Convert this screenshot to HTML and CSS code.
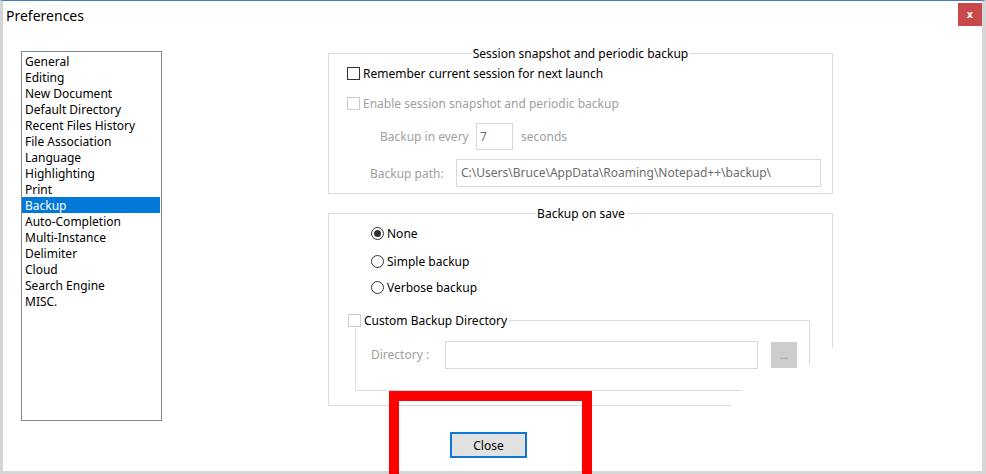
FILE: index.html
```html
<!DOCTYPE html>
<html>
<head>
<meta charset="utf-8">
<link rel="stylesheet" href="styles.css">
</head>
<body>
<div class="window">
  <div class="titlebar">
    <div class="title">Preferences</div>
    <div class="xbtn">x</div>
  </div>
  <div class="main">
    <div class="list">
      <div class="item">General</div>
      <div class="item">Editing</div>
      <div class="item">New Document</div>
      <div class="item">Default Directory</div>
      <div class="item">Recent Files History</div>
      <div class="item">File Association</div>
      <div class="item">Language</div>
      <div class="item">Highlighting</div>
      <div class="item">Print</div>
      <div class="item selected">Backup</div>
      <div class="item">Auto-Completion</div>
      <div class="item">Multi-Instance</div>
      <div class="item">Delimiter</div>
      <div class="item">Cloud</div>
      <div class="item">Search Engine</div>
      <div class="item">MISC.</div>
    </div>
    <div class="panel">
      <div class="group g1">
        <div class="legend">Session snapshot and periodic backup</div>
        <div class="row r1"><span class="cb"></span><span class="lbl">Remember current session for next launch</span></div>
        <div class="row r2 dis"><span class="cb off"></span><span class="lbl">Enable session snapshot and periodic backup</span></div>
        <div class="row r3 dis"><span class="fl w96">Backup in every</span><span class="inp secs">7</span><span class="after">seconds</span></div>
        <div class="row r4 dis"><span class="fl w86">Backup path:</span><span class="inp path">C:\Users\Bruce\AppData\Roaming\Notepad++\backup\</span></div>
      </div>
      <div class="group g2">
        <div class="legend">Backup on save</div>
        <div class="row rad first"><span class="radio on"></span><span class="lbl">None</span></div>
        <div class="row rad second"><span class="radio"></span><span class="lbl">Simple backup</span></div>
        <div class="row rad third"><span class="radio"></span><span class="lbl">Verbose backup</span></div>
        <div class="sub">
          <div class="sublegend"><span class="cb off"></span><span class="lbl">Custom Backup Directory</span></div>
          <div class="row dirrow dis"><span class="fl w74">Directory :</span><span class="inp dir"></span><span class="dots">...</span></div>
        </div>
      </div>
    </div>
  </div>
  <div class="footer">
    <div class="closebtn">Close</div>
  </div>
  <div class="mark"></div>
</div>
</body>
</html>
```

FILE: styles.css
```css
html, body {
  margin: 0;
  padding: 0;
  background: #ffffff;
}
body {
  width: 986px;
  height: 474px;
  overflow: hidden;
  font-family: "Noto Sans", "Open Sans", sans-serif;
  font-size: 12px;
  color: #000;
}
.window {
  position: relative;
  box-sizing: border-box;
  width: 986px;
  height: 474px;
  border-top: 1px solid #3c7fc2;
  border-left: 3px solid #d4d4d4;
  border-right: 4px solid #d6d6d6;
  border-bottom: 3px solid #d6d6d6;
  background: #fff;
}
.titlebar {
  display: flex;
  align-items: flex-start;
  height: 30px;
}
.title {
  margin-top: 5px;
  padding-left: 3px;
  font-size: 14px;
  line-height: 20px;
}
.xbtn {
  margin-left: auto;
  margin-top: 2px;
  width: 24px;
  height: 23px;
  background: #c9484c;
  color: #fff;
  font-size: 10px;
  font-weight: bold;
  line-height: 22px;
  text-align: center;
}
.main {
  display: flex;
  align-items: flex-start;
  height: 390px;
}
.list {
  margin-top: 20px;
  margin-left: 18px;
  box-sizing: border-box;
  width: 141px;
  height: 370px;
  border: 1px solid #828790;
  padding-top: 1px;
}
.item {
  height: 16px;
  line-height: 17px;
  padding-left: 3px;
  margin-right: 1px;
  white-space: nowrap;
}
.item.selected {
  background: #0078d7;
  color: #fff;
}
.panel {
  margin-left: 166px;
  margin-top: 22px;
}
.group {
  box-sizing: border-box;
  width: 505px;
  border: 1px solid #dcdcdc;
}
.g1 { height: 141px; }
.g2 {
  height: 193px;
  margin-top: 19px;
  border-right: none;
  border-bottom: none;
  background:
    linear-gradient(#dcdcdc, #dcdcdc) right top / 1px 134px no-repeat,
    linear-gradient(#dcdcdc, #dcdcdc) left bottom / 402px 1px no-repeat;
}
.legend {
  width: max-content;
  margin: -9px auto 0;
  padding: 0 2px;
  background: #fff;
  height: 16px;
  line-height: 17px;
}
.row {
  display: flex;
  align-items: center;
  height: 16px;
  line-height: 17px;
  white-space: nowrap;
}
.dis { color: #a0a0a0; }
.cb {
  box-sizing: border-box;
  width: 13px;
  height: 13px;
  border: 1px solid #333;
  background: #fff;
  flex: none;
}
.cb.off { border-color: #cccccc; }
.lbl { margin-left: 3px; }
.r1 { margin-top: 4px; padding-left: 18px; }
.r2 { margin-top: 14px; padding-left: 18px; }
.r3 { margin-top: 12px; padding-left: 51px; height: 27px; }
.r4 { margin-top: 9px; padding-left: 41px; height: 28px; }
.fl { flex: none; }
.w96 { width: 96px; }
.w86 { width: 86px; }
.w74 { width: 74px; }
.inp {
  box-sizing: border-box;
  border: 1px solid #d9d9d9;
  background: #fff;
  height: 27px;
  line-height: 25px;
  padding-left: 3px;
  flex: none;
}
.secs { width: 37px; color: #6d6d6d; }
.after { margin-left: 8px; }
.path { width: 365px; height: 28px; line-height: 26px; padding-left: 4px; color: #6d6d6d; }
.rad { padding-left: 42px; }
.rad .lbl { margin-left: 3px; color: #000; }
.first { margin-top: 4px; }
.second { margin-top: 12px; }
.third { margin-top: 10px; }
.radio {
  box-sizing: border-box;
  width: 13px;
  height: 13px;
  border: 1px solid #333;
  border-radius: 50%;
  background: #fff;
  flex: none;
  display: flex;
  align-items: center;
  justify-content: center;
}
.radio.on::before {
  content: "";
  width: 7px;
  height: 7px;
  border-radius: 50%;
  background: #333;
}
.sub {
  box-sizing: border-box;
  margin-top: 25px;
  margin-left: 26px;
  width: 455px;
  height: 71px;
  border-top: 1px solid #dcdcdc;
  border-left: 1px solid #dcdcdc;
  background:
    linear-gradient(#dcdcdc, #dcdcdc) right top / 1px 44px no-repeat,
    linear-gradient(#dcdcdc, #dcdcdc) left bottom / 386px 1px no-repeat;
}
.sublegend {
  display: flex;
  align-items: center;
  width: max-content;
  height: 16px;
  line-height: 17px;
  margin: -9px 0 0 -8px;
  padding-right: 2px;
  background: #fff;
  white-space: nowrap;
}
.dirrow {
  margin-top: 13px;
  padding-left: 15px;
  height: 28px;
  align-items: flex-start;
}
.dirrow .fl { line-height: 28px; }
.dir { width: 313px; height: 28px; }
.dots {
  margin-left: 13px;
  margin-top: 1px;
  width: 26px;
  height: 26px;
  background: #cccccc;
  color: #8a8a8a;
  font-size: 10px;
  line-height: 26px;
  text-align: center;
}
.footer {
  display: flex;
  padding-left: 447px;
  padding-top: 11px;
}
.closebtn {
  box-sizing: border-box;
  width: 77px;
  height: 26px;
  border: 2px solid #0a78d4;
  background: #e1e1e1;
  line-height: 24px;
  text-align: center;
}
.mark {
  position: absolute;
  left: 386px;
  top: 390px;
  width: 203px;
  height: 100px;
  box-sizing: border-box;
  border: 10px solid #ff0000;
}
```
